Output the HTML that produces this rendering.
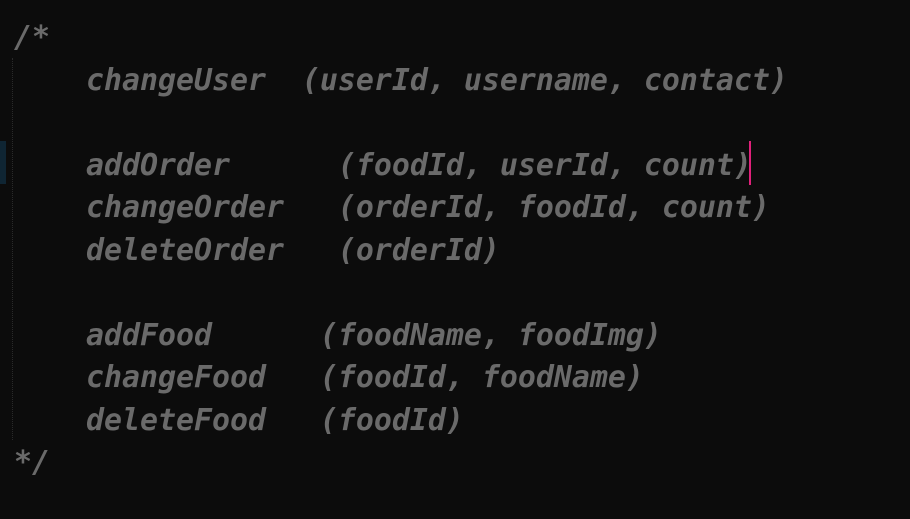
<!DOCTYPE html>
<html><head><style>
html,body{margin:0;padding:0;background:#0c0c0c;width:910px;height:519px;overflow:hidden}
pre{position:absolute;left:14px;top:17px;margin:0;font-family:"DejaVu Sans Mono","Liberation Mono",monospace;font-weight:bold;font-style:italic;font-size:29.9px;line-height:42.5px;color:#6a6a6a}
.bar{position:absolute;left:0;top:141px;width:6px;height:43px;background:#0f2533}
.guide{position:absolute;left:12px;top:58px;width:0;height:382px;border-left:1px dotted #2a2a2a}
.cur{position:absolute;left:749px;top:141px;width:2px;height:44px;background:#e0207a}
</style></head><body>
<div class="bar"></div><div class="guide"></div>
<pre>/*
    changeUser  (userId, username, contact)

    addOrder      (foodId, userId, count)
    changeOrder   (orderId, foodId, count)
    deleteOrder   (orderId)

    addFood      (foodName, foodImg)
    changeFood   (foodId, foodName)
    deleteFood   (foodId)
*/</pre>
<div class="cur"></div>
</body></html>
